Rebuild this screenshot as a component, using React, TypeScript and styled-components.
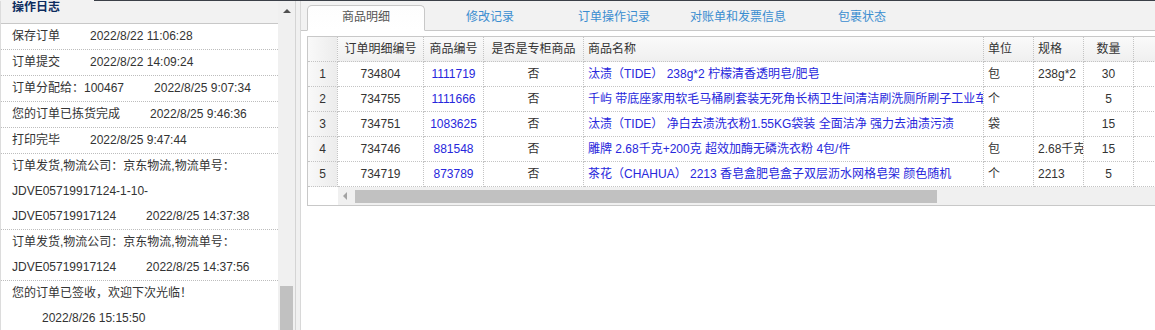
import styled, { createGlobalStyle } from "styled-components";

interface ILogItem {
  title: string;
  time: string;
}

interface IGoodsRow {
  detailNo: string;
  goodsNo: string;
  counter: string;
  name: string;
  unit: string;
  spec: string;
  qty: string;
}

const logs: ILogItem[] = [
  { title: "保存订单", time: "2022/8/22 11:06:28" },
  { title: "订单提交", time: "2022/8/22 14:09:24" },
  { title: "订单分配给：100467", time: "2022/8/25 9:07:34" },
  { title: "您的订单已拣货完成", time: "2022/8/25 9:46:36" },
  { title: "打印完毕", time: "2022/8/25 9:47:44" },
  {
    title: "订单发货,物流公司：京东物流,物流单号：JDVE05719917124-1-10-\nJDVE05719917124",
    time: "2022/8/25 14:37:38",
  },
  {
    title: "订单发货,物流公司：京东物流,物流单号：JDVE05719917124",
    time: "2022/8/25 14:37:56",
  },
  { title: "您的订单已签收，欢迎下次光临！", time: "2022/8/26 15:15:50" },
];

const goods: IGoodsRow[] = [
  {
    detailNo: "734804",
    goodsNo: "1111719",
    counter: "否",
    name: "汰渍（TIDE） 238g*2 柠檬清香透明皂/肥皂",
    unit: "包",
    spec: "238g*2",
    qty: "30",
  },
  {
    detailNo: "734755",
    goodsNo: "1111666",
    counter: "否",
    name: "千屿 带底座家用软毛马桶刷套装无死角长柄卫生间清洁刷洗厕所刷子工业车间",
    unit: "个",
    spec: "",
    qty: "5",
  },
  {
    detailNo: "734751",
    goodsNo: "1083625",
    counter: "否",
    name: "汰渍（TIDE） 净白去渍洗衣粉1.55KG袋装 全面洁净 强力去油渍污渍",
    unit: "袋",
    spec: "",
    qty: "15",
  },
  {
    detailNo: "734746",
    goodsNo: "881548",
    counter: "否",
    name: "雕牌 2.68千克+200克 超效加酶无磷洗衣粉 4包/件",
    unit: "包",
    spec: "2.68千克",
    qty: "15",
  },
  {
    detailNo: "734719",
    goodsNo: "873789",
    counter: "否",
    name: "茶花（CHAHUA） 2213 香皂盒肥皂盒子双层沥水网格皂架 颜色随机",
    unit: "个",
    spec: "2213",
    qty: "5",
  },
];

const tabs = ["商品明细", "修改记录", "订单操作记录", "对账单和发票信息", "包裹状态"];

const GlobalStyle = createGlobalStyle`
  html, body {
    margin: 0;
    padding: 0;
    background: #fff;
  }
  body {
    font-family: "Liberation Sans", Arial, "Noto Sans CJK SC", sans-serif;
    font-size: 12px;
    color: #333;
  }
  * {
    box-sizing: border-box;
  }
`;

const Page = styled.div`
  width: 1155px;
  height: 330px;
  overflow: hidden;
  display: flex;
  flex-direction: column;
  background: #f0f0f0;
`;

const TopEdge = styled.div`
  flex: none;
  height: 1px;
  display: flex;

  &::before {
    content: "";
    width: 94px;
    background: #f2f2f2;
  }
  &::after {
    content: "";
    flex: 1;
    background: #3b4048;
  }
`;

const Body = styled.div`
  flex: 1;
  min-height: 0;
  display: flex;
`;

const LogPanel = styled.aside`
  flex: none;
  width: 296px;
  display: flex;
  border-right: 1px solid #d4d4d4;
`;

const LogList = styled.div`
  width: 278px;
  overflow: hidden;
  background: #fff;
  border-left: 1px solid #dcdcdc;
`;

const LogHeader = styled.div`
  height: 23px;
  padding-left: 11px;
  background: #f2f2f2;
  border-bottom: 1px solid #c8c8c8;
  color: #0e2d5f;
  font-weight: bold;
  line-height: 12px;
`;

const LogRow = styled.div`
  padding: 0 24px 0 11px;
  line-height: 25px;
  white-space: pre-line;
  border-bottom: 1px dotted #bdbdbd;
`;

const LogTime = styled.span`
  display: inline-block;
  margin-left: 30px;
  white-space: nowrap;
`;

const VScroll = styled.div`
  width: 17px;
  display: flex;
  flex-direction: column;
  align-items: center;
  background: #f0f0f0;
`;

const UpArrow = styled.div`
  margin-top: 8px;
  width: 0;
  height: 0;
  border-left: 4px solid transparent;
  border-right: 4px solid transparent;
  border-bottom: 4px solid #505050;
`;

const VThumb = styled.div`
  margin-top: auto;
  width: 13px;
  height: 44px;
  background: #c1c1c1;
`;

const DetailPanel = styled.section`
  flex: 1;
  min-width: 0;
  margin-left: 4px;
  display: flex;
  flex-direction: column;
  overflow: hidden;
  background: #fff;
  border-left: 1px solid #d8d8d8;
`;

const TabBar = styled.div`
  flex: none;
  height: 30px;
  display: flex;
  align-items: flex-end;
  gap: 6px;
  padding-left: 6px;
  background: #f2f2f2;
  border-bottom: 1px solid #c8c8c8;
`;

const Tab = styled.div<{ $active?: boolean }>`
  flex: none;
  width: 118px;
  height: 26px;
  margin-bottom: -1px;
  line-height: 22px;
  text-align: center;
  border: 1px solid ${(p) => (p.$active ? "#c8c8c8" : "transparent")};
  border-bottom-color: ${(p) => (p.$active ? "#fff" : "transparent")};
  border-radius: 5px 5px 0 0;
  background: ${(p) => (p.$active ? "linear-gradient(#fdfdfd, #fff)" : "transparent")};
  color: ${(p) => (p.$active ? "#555" : "#3a8dd0")};
`;

const TabBody = styled.div`
  flex: 1;
  padding: 5px 0 0 6px;
`;

const Grid = styled.div`
  width: 908px;
  border: 1px solid #c8c8c8;
  background: #fff;
`;

const GridRow = styled.div<{ $head?: boolean }>`
  display: grid;
  grid-template-columns: 30px 86px 60px 100px 400px 50px 50px 50px 80px;
  height: 25px;
  background: ${(p) => (p.$head ? "linear-gradient(#fafafa, #efefef)" : "#fff")};
`;

const Cell = styled.div<{ $align?: "left" | "center"; $link?: boolean; $num?: boolean }>`
  height: 25px;
  padding: 0 4px;
  line-height: 24px;
  white-space: nowrap;
  overflow: hidden;
  text-align: ${(p) => p.$align || "left"};
  color: ${(p) => (p.$link ? "#2727dc" : "#333")};
  border-right: 1px dotted #c4c4c4;
  border-bottom: 1px dotted #c4c4c4;
  background: ${(p) => (p.$num ? "linear-gradient(to right, #f9f9f9, #ececec)" : "transparent")};
`;

const HScrollRow = styled.div`
  display: flex;
  height: 18px;
`;

const FrozenBlank = styled.div`
  width: 30px;
  background: #fff;
`;

const HTrack = styled.div`
  flex: 1;
  display: flex;
  align-items: center;
  background: #f0f0f0;
`;

const LeftArrow = styled.div`
  margin-left: 5px;
  width: 0;
  height: 0;
  border-top: 4px solid transparent;
  border-bottom: 4px solid transparent;
  border-right: 4px solid #a3a3a3;
`;

const HThumb = styled.div`
  margin-left: 8px;
  width: 582px;
  height: 13px;
  background: #c1c1c1;
`;

const App = () => {
  return (
    <>
      <GlobalStyle />
      <Page>
        <TopEdge />
        <Body>
          <LogPanel>
            <LogList>
              <LogHeader>操作日志</LogHeader>
              {logs.map((log, i) => (
                <LogRow key={i}>
                  {log.title}
                  <LogTime>{log.time}</LogTime>
                </LogRow>
              ))}
            </LogList>
            <VScroll>
              <UpArrow />
              <VThumb />
            </VScroll>
          </LogPanel>

          <DetailPanel>
            <TabBar>
              {tabs.map((t, i) => (
                <Tab key={t} $active={i === 0}>
                  {t}
                </Tab>
              ))}
            </TabBar>
            <TabBody>
              <Grid>
                <GridRow $head>
                  <Cell $num />
                  <Cell $align="center">订单明细编号</Cell>
                  <Cell $align="center">商品编号</Cell>
                  <Cell $align="center">是否是专柜商品</Cell>
                  <Cell>商品名称</Cell>
                  <Cell>单位</Cell>
                  <Cell>规格</Cell>
                  <Cell $align="center">数量</Cell>
                  <Cell />
                </GridRow>
                {goods.map((g, i) => (
                  <GridRow key={g.detailNo}>
                    <Cell $num $align="center">
                      {i + 1}
                    </Cell>
                    <Cell $align="center">{g.detailNo}</Cell>
                    <Cell $align="center" $link>
                      {g.goodsNo}
                    </Cell>
                    <Cell $align="center">{g.counter}</Cell>
                    <Cell $link>{g.name}</Cell>
                    <Cell>{g.unit}</Cell>
                    <Cell>{g.spec}</Cell>
                    <Cell $align="center">{g.qty}</Cell>
                    <Cell />
                  </GridRow>
                ))}
                <HScrollRow>
                  <FrozenBlank />
                  <HTrack>
                    <LeftArrow />
                    <HThumb />
                  </HTrack>
                </HScrollRow>
              </Grid>
            </TabBody>
          </DetailPanel>
        </Body>
      </Page>
    </>
  );
};

export default App;
